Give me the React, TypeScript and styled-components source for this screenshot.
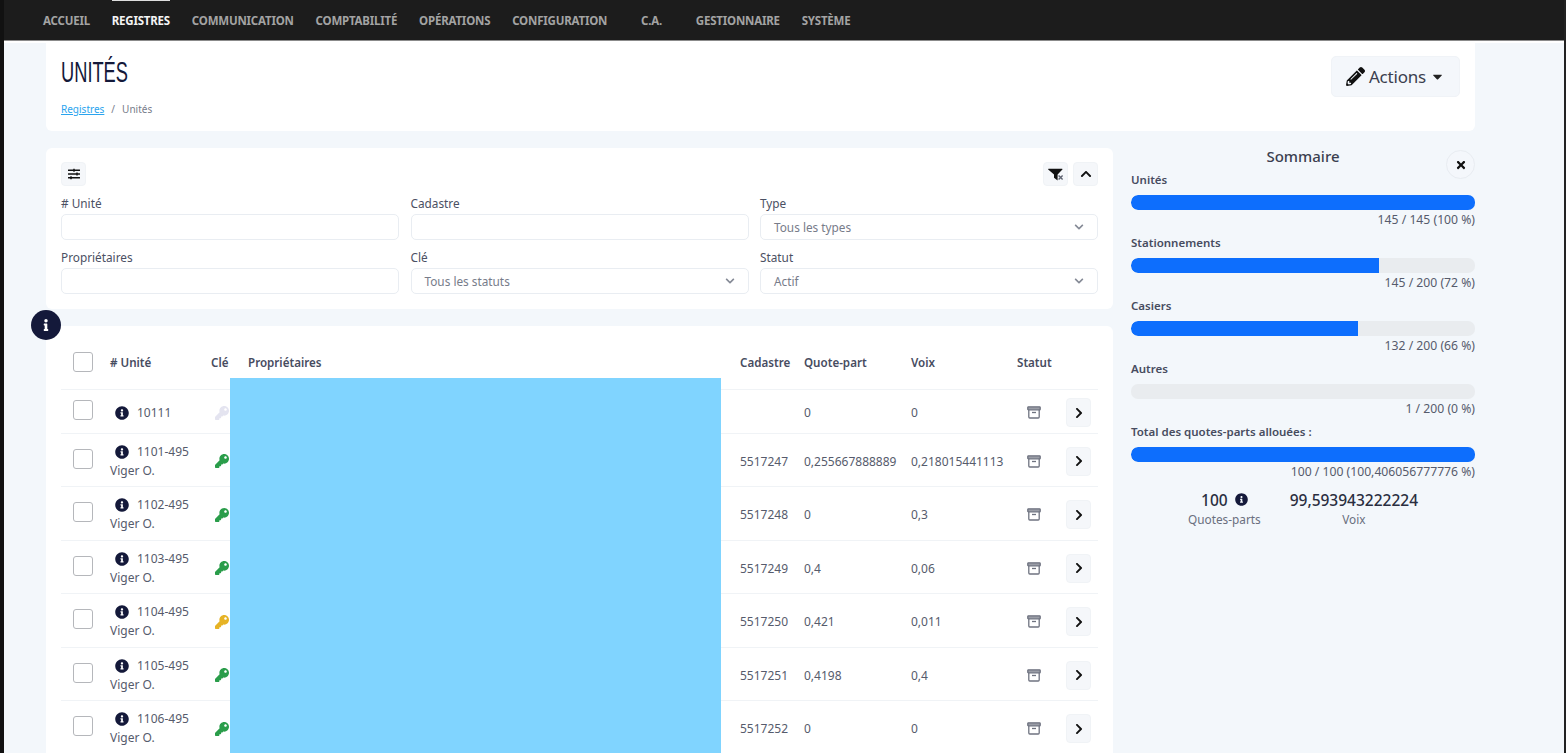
import React from 'react';
import styled, { createGlobalStyle } from 'styled-components';
import {
  FaCaretDown,
  FaChevronDown,
  FaChevronRight,
  FaChevronUp,
  FaInfo,
  FaInfoCircle,
  FaKey,
  FaPencilAlt,
  FaSlidersH,
  FaTimes,
} from 'react-icons/fa';

const GlobalStyle = createGlobalStyle`
  html, body {
    margin: 0;
    height: 100%;
    overflow: hidden;
    background: #f3f7fb;
    font-family: "Noto Sans", "Open Sans", sans-serif;
    font-size: 12px;
    color: #4b5063;
  }
  * { box-sizing: border-box; }
`;

const Frame = styled.div`
  height: 753px;
  overflow: hidden;
  position: relative;
  border-left: 4px solid #111;
  border-right: 2px solid #222;
`;

const TopNav = styled.nav`
  height: 41px;
  background: #1c1c1c;
  border-bottom: 1px solid #8b8b8b;
  box-shadow: 0 2px 0 #fff;
  padding: 1px 0 0 39px;
  display: flex;
  align-items: center;
  gap: 21.8px;
`;

const NavItem = styled.a<{ $active?: boolean; $wide?: boolean }>`
  position: relative;
  font-size: 11.5px;
  font-weight: 700;
  line-height: 39px;
  letter-spacing: -0.2px;
  color: ${(p) => (p.$active ? '#f4f4f4' : '#a3a3a3')};
  margin: ${(p) => (p.$wide ? '0 12px' : '0')};

  &::before {
    content: ${(p) => (p.$active ? "''" : 'none')};
    position: absolute;
    top: -1px;
    left: 0;
    right: 0;
    height: 1px;
    background: #ddd;
  }
`;

const Content = styled.main`
  padding: 0 89px 0 42px;
  display: flex;
  flex-direction: column;
  gap: 17px;
`;

const HeaderCard = styled.header`
  height: 90px;
  background: #fff;
  border-radius: 0 0 6px 6px;
  padding: 15px 15px 0 15px;
  display: flex;
  justify-content: space-between;
  align-items: flex-start;
`;

const TitleBlock = styled.div`
  display: flex;
  flex-direction: column;
  gap: 14px;
`;

const Title = styled.h1`
  margin: 0;
  font-family: "Liberation Sans", sans-serif;
  font-size: 29px;
  line-height: 32px;
  font-weight: 400;
  color: #14193a;
  transform: scaleX(0.63);
  transform-origin: left;
`;

const Breadcrumb = styled.div`
  font-size: 10px;
  line-height: 14px;
  color: #777c8a;
  display: flex;
  gap: 7px;
`;

const CrumbLink = styled.a`
  color: #2aa4ee;
  text-decoration: underline;
`;

const ActionsButton = styled.button`
  width: 129px;
  height: 41px;
  border: 1px solid #f0f3f7;
  border-radius: 5px;
  background: #f4f7fb;
  color: #3b3f4f;
  font-family: inherit;
  font-size: 17px;
  letter-spacing: -0.2px;
  display: flex;
  align-items: center;
  justify-content: center;
  gap: 4px;
  padding: 0;

  svg:first-child { color: #111; font-size: 19px; }
  svg:last-child { color: #222; font-size: 15px; }
`;

const Columns = styled.div`
  display: flex;
  align-items: flex-start;
  gap: 18px;
`;

const LeftColumn = styled.div`
  width: 1067px;
  display: flex;
  flex-direction: column;
  gap: 17px;
`;

const Card = styled.section`
  position: relative;
  background: #fff;
  border-radius: 6px;
`;

const FilterCard = styled(Card)`
  height: 161px;
  padding: 14px 15px 0;
`;

const FilterTools = styled.div`
  display: flex;
  justify-content: space-between;
  height: 24px;
`;

const ToolGroup = styled.div`
  display: flex;
  gap: 5px;
`;

const ToolButton = styled.button`
  width: 25px;
  height: 24px;
  padding: 0;
  border: 1px solid #f0f3f6;
  border-radius: 4px;
  background: #f5f7fa;
  color: #111;
  display: flex;
  align-items: center;
  justify-content: center;
  font-size: 12px;
`;

const FilterGrid = styled.div`
  margin-top: 9px;
  display: grid;
  grid-template-columns: repeat(3, 338px);
  column-gap: 11.5px;
  row-gap: 9px;
`;

const Field = styled.label`
  display: flex;
  flex-direction: column;
  gap: 3px;
  font-size: 11.8px;
  line-height: 16px;
  color: #4b5063;
`;

const InputBox = styled.div`
  height: 26px;
  border: 1px solid #e9edf2;
  border-radius: 5px;
  background: #fff;
  padding: 0 13px;
  display: flex;
  align-items: center;
  justify-content: space-between;
  color: #777c8a;

  svg { color: #858a96; font-size: 10px; }
`;

const InfoBadge = styled.div`
  position: absolute;
  top: -16px;
  left: -15px;
  width: 30px;
  height: 30px;
  border-radius: 50%;
  background: #14193a;
  color: #fff;
  display: flex;
  align-items: center;
  justify-content: center;
  font-size: 12px;
`;

const TableCard = styled(Card)`
  height: 500px;
  padding: 9px 15px 0;
`;

const Row = styled.div<{ $height: number }>`
  height: ${(p) => p.$height}px;
  display: grid;
  grid-template-columns: 49px 101px 37px 492px 64px 107px 106px 49px 1fr;
  align-items: center;
  border-bottom: 1px solid #f0f3f6;
`;

const BodyRow = styled(Row)`
  padding-top: 3px;
`;

const HeadCell = styled.div`
  font-size: 11.6px;
  font-weight: 600;
  color: #474c5f;
  white-space: nowrap;
`;

const Cell = styled.div`
  font-size: 12px;
  color: #565b6c;
  white-space: nowrap;
`;

const Checkbox = styled.span`
  display: block;
  width: 20px;
  height: 20px;
  margin-left: 12px;
  border: 1.5px solid #b5b7bb;
  border-radius: 3px;
  background: #fff;
`;

const RowCheckbox = styled(Checkbox)`
  margin-bottom: 5px;
`;

const UnitLine = styled.div`
  display: flex;
  align-items: center;
  gap: 8px;
  padding-left: 5px;
  line-height: 18px;

  svg { color: #14193a; font-size: 14px; }
`;

const UnitOwner = styled.div`
  line-height: 19px;
`;

const KeyCell = styled(Cell)<{ $color: string }>`
  padding-left: 4px;
  font-size: 14px;
  line-height: 0;
  color: ${(p) => p.$color};
`;

const StatusCell = styled(Cell)`
  padding-left: 10px;
  line-height: 0;
  color: #6f7380;
`;

const RowButton = styled.button`
  width: 25px;
  height: 29px;
  padding: 0;
  border: 1px solid #f0f3f6;
  border-radius: 4px;
  background: #f5f7fa;
  color: #111;
  display: flex;
  align-items: center;
  justify-content: center;
  font-size: 12px;
`;

const Redaction = styled.div`
  position: absolute;
  left: 184px;
  top: 52px;
  width: 491px;
  height: 380px;
  background: #80d4ff;
`;

const Sidebar = styled.aside`
  position: relative;
  width: 344px;
  color: #4b5063;
`;

const SidebarTitle = styled.h2`
  margin: -2px 0 0;
  height: 27px;
  text-align: center;
  font-size: 15px;
  line-height: 20px;
  font-weight: 500;
  color: #3b3f4f;
`;

const CloseButton = styled.button`
  position: absolute;
  top: 2px;
  right: 0;
  width: 29px;
  height: 29px;
  padding: 0;
  border: 1px solid #e8ecf1;
  border-radius: 50%;
  background: #f4f7fb;
  color: #111;
  display: flex;
  align-items: center;
  justify-content: center;
  font-size: 12px;
`;

const Meter = styled.div`
  height: 63px;
  display: flex;
  flex-direction: column;
`;

const MeterLabel = styled.div`
  font-size: 11.5px;
  font-weight: 600;
  line-height: 16px;
  color: #474c5f;
  margin: -1px 0 7px;
`;

const MeterTrack = styled.div`
  height: 15px;
  flex: none;
  border-radius: 7px;
  background: #e9ecef;
  overflow: hidden;
`;

const MeterFill = styled.div`
  height: 100%;
  background: #0d6efd;
  border-radius: 7px 0 0 7px;
`;

const MeterValue = styled.div`
  margin-top: 2px;
  font-size: 12.2px;
  line-height: 16px;
  text-align: right;
  color: #565b6c;
`;

const Stats = styled.div`
  margin-top: 2px;
  padding-left: 57px;
  display: flex;
  gap: 29px;
`;

const Stat = styled.div`
  text-align: center;
`;

const StatValue = styled.div`
  font-size: 15.5px;
  line-height: 20px;
  font-weight: 500;
  color: #2a2e40;

  svg { font-size: 13px; color: #14193a; margin-left: 7px; }
`;

const StatLabel = styled.div`
  margin-top: 1px;
  font-size: 11.8px;
  line-height: 16px;
  color: #6a6f7e;
`;

const ArchiveIcon = () => (
  <svg width="14" height="13" viewBox="0 0 14 13" fill="none" stroke="currentColor" strokeWidth="1.3">
    <rect x="0.8" y="0.8" width="12.4" height="3" rx="0.6" fill="#9a9da6" />
    <path d="M1.8 3.8V11a1 1 0 0 0 1 1h8.4a1 1 0 0 0 1-1V3.8" />
    <path d="M5 6.5h4" />
  </svg>
);

const FilterClearIcon = () => (
  <svg width="16" height="13" viewBox="0 0 16 13">
    <path d="M0.6 0.8h13.4a0.5 0.5 0 0 1 0.4 0.8L9.6 6.6V12.4L6 9.8V6.6L0.2 1.6a0.5 0.5 0 0 1 0.4-0.8z" fill="#111" />
    <path d="M10.6 7.6l4 4M14.6 7.6l-4 4" stroke="#5d6270" strokeWidth="1.4" fill="none" />
  </svg>
);

const navItems = ['ACCUEIL', 'REGISTRES', 'COMMUNICATION', 'COMPTABILITÉ', 'OPÉRATIONS', 'CONFIGURATION', 'C.A.', 'GESTIONNAIRE', 'SYSTÈME'];

const meters = [
  { label: 'Unités', value: '145 / 145 (100 %)', percent: 100 },
  { label: 'Stationnements', value: '145 / 200 (72 %)', percent: 72 },
  { label: 'Casiers', value: '132 / 200 (66 %)', percent: 66 },
  { label: 'Autres', value: '1 / 200 (0 %)', percent: 0 },
  { label: 'Total des quotes-parts allouées :', value: '100 / 100 (100,406056777776 %)', percent: 100 },
];

const GREEN = '#2a9d4a';
const units = [
  { id: '10111', owner: '', key: '#e4e4f0', cadastre: '', part: '0', voix: '0' },
  { id: '1101-495', owner: 'Viger O.', key: GREEN, cadastre: '5517247', part: '0,255667888889', voix: '0,218015441113' },
  { id: '1102-495', owner: 'Viger O.', key: GREEN, cadastre: '5517248', part: '0', voix: '0,3' },
  { id: '1103-495', owner: 'Viger O.', key: GREEN, cadastre: '5517249', part: '0,4', voix: '0,06' },
  { id: '1104-495', owner: 'Viger O.', key: '#e6b325', cadastre: '5517250', part: '0,421', voix: '0,011' },
  { id: '1105-495', owner: 'Viger O.', key: GREEN, cadastre: '5517251', part: '0,4198', voix: '0,4' },
  { id: '1106-495', owner: 'Viger O.', key: GREEN, cadastre: '5517252', part: '0', voix: '0' },
];

const App: React.FC = () => {
  return (
    <Frame>
      <GlobalStyle />
      <TopNav>
        {navItems.map((item) => (
          <NavItem key={item} $active={item === 'REGISTRES'} $wide={item === 'C.A.'}>
            {item}
          </NavItem>
        ))}
      </TopNav>

      <Content>
        <HeaderCard>
          <TitleBlock>
            <Title>UNITÉS</Title>
            <Breadcrumb>
              <CrumbLink>Registres</CrumbLink>
              <span>/</span>
              <span>Unités</span>
            </Breadcrumb>
          </TitleBlock>
          <ActionsButton>
            <FaPencilAlt />
            Actions
            <FaCaretDown />
          </ActionsButton>
        </HeaderCard>

        <Columns>
          <LeftColumn>
            <FilterCard>
              <FilterTools>
                <ToolButton><FaSlidersH /></ToolButton>
                <ToolGroup>
                  <ToolButton><FilterClearIcon /></ToolButton>
                  <ToolButton><FaChevronUp /></ToolButton>
                </ToolGroup>
              </FilterTools>
              <FilterGrid>
                <Field># Unité<InputBox /></Field>
                <Field>Cadastre<InputBox /></Field>
                <Field>Type<InputBox>Tous les types<FaChevronDown /></InputBox></Field>
                <Field>Propriétaires<InputBox /></Field>
                <Field>Clé<InputBox>Tous les statuts<FaChevronDown /></InputBox></Field>
                <Field>Statut<InputBox>Actif<FaChevronDown /></InputBox></Field>
              </FilterGrid>
            </FilterCard>

            <TableCard>
              <InfoBadge><FaInfo /></InfoBadge>
              <Row $height={55}>
                <Checkbox />
                <HeadCell># Unité</HeadCell>
                <HeadCell>Clé</HeadCell>
                <HeadCell>Propriétaires</HeadCell>
                <HeadCell>Cadastre</HeadCell>
                <HeadCell>Quote-part</HeadCell>
                <HeadCell>Voix</HeadCell>
                <HeadCell>Statut</HeadCell>
                <span />
              </Row>
              {units.map((unit) => (
                <BodyRow key={unit.id} $height={unit.owner ? 53.5 : 43.5}>
                  <RowCheckbox />
                  <Cell>
                    <UnitLine><FaInfoCircle />{unit.id}</UnitLine>
                    {unit.owner && <UnitOwner>{unit.owner}</UnitOwner>}
                  </Cell>
                  <KeyCell $color={unit.key}><FaKey /></KeyCell>
                  <Cell />
                  <Cell>{unit.cadastre}</Cell>
                  <Cell>{unit.part}</Cell>
                  <Cell>{unit.voix}</Cell>
                  <StatusCell><ArchiveIcon /></StatusCell>
                  <RowButton><FaChevronRight /></RowButton>
                </BodyRow>
              ))}
              <Redaction />
            </TableCard>
          </LeftColumn>

          <Sidebar>
            <SidebarTitle>Sommaire</SidebarTitle>
            <CloseButton><FaTimes /></CloseButton>
            {meters.map((meter) => (
              <Meter key={meter.label}>
                <MeterLabel>{meter.label}</MeterLabel>
                <MeterTrack>
                  <MeterFill style={{ width: `${meter.percent}%` }} />
                </MeterTrack>
                <MeterValue>{meter.value}</MeterValue>
              </Meter>
            ))}
            <Stats>
              <Stat>
                <StatValue>100<FaInfoCircle /></StatValue>
                <StatLabel>Quotes-parts</StatLabel>
              </Stat>
              <Stat>
                <StatValue>99,593943222224</StatValue>
                <StatLabel>Voix</StatLabel>
              </Stat>
            </Stats>
          </Sidebar>
        </Columns>
      </Content>
    </Frame>
  );
};

export default App;
